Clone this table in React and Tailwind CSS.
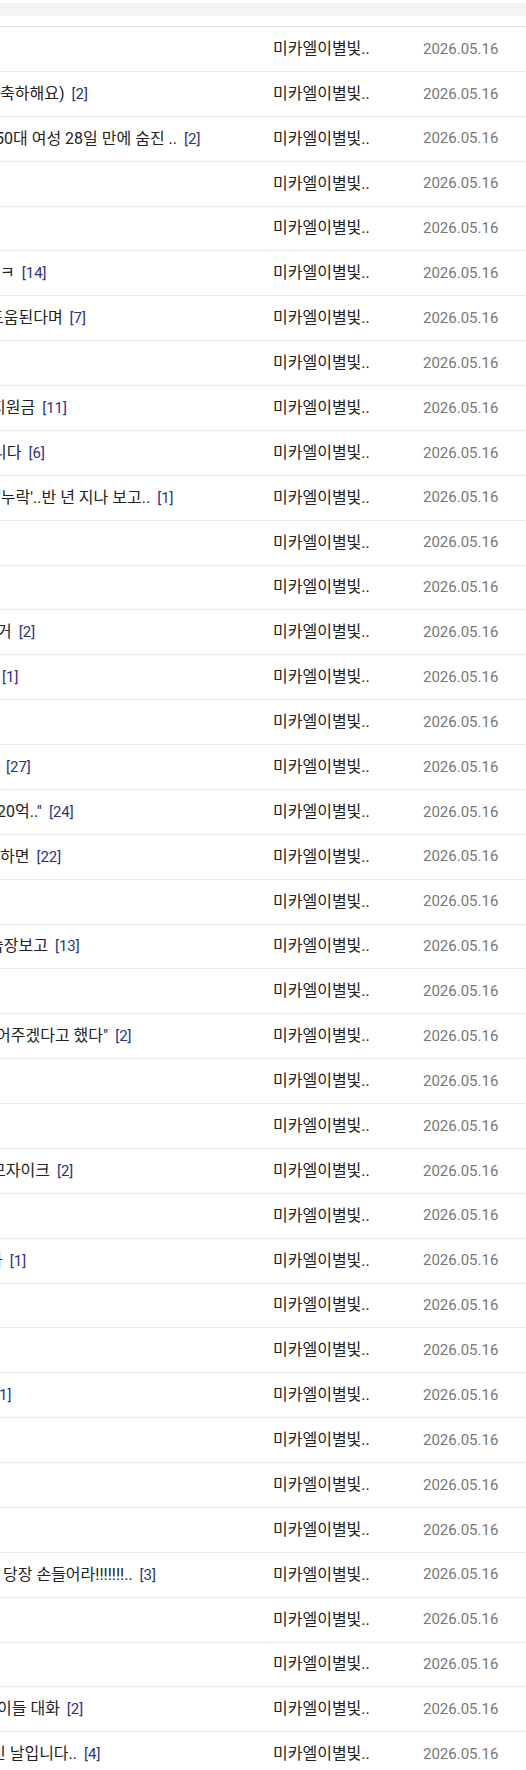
import React from 'react'

const rows = [
  {},
  { t: '축하해요)', c: 2, s: 0 },
  { t: '50대 여성 28일 만에 숨진 ..', c: 2, s: -5 },
  {},
  {},
  { t: 'ㅋ', c: 14, s: 0 },
  { t: '도움된다며', c: 7, s: -11 },
  {},
  { t: '지원금', c: 11, s: -9 },
  { t: '니다', c: 6, s: -8 },
  { t: "'누락'..반 년 지나 보고..", c: 1, s: -2 },
  {},
  {},
  { t: '거', c: 2, s: -3 },
  { t: '', c: 1, s: -5 },
  {},
  { t: '', c: 27, s: -1 },
  { t: '20억.."', c: 24, s: -3 },
  { t: ' 하면', c: 22, s: 0 },
  {},
  { t: '습장보고', c: 13, s: -11 },
  {},
  { t: '어주겠다고 했다"', c: 2, s: -4 },
  {},
  {},
  { t: '모자이크', c: 2, s: -9 },
  {},
  { t: '가', c: 1, s: -12 },
  {},
  {},
  { t: '', c: 1, s: -12 },
  {},
  {},
  {},
  { t: ' 당장 손들어라!!!!!!!..', c: 3, s: 3 },
  {},
  {},
  { t: '이들 대화', c: 2, s: -3 },
  { t: '인 날입니다..', c: 4, s: -9 },
]

const Row = ({ t, c, s = 0 }) => (
  <div className="flex h-[44.88px] items-center border-b border-[#ebebeb]">
    {/* title column starts off-screen, only its tail shows */}
    <div className="w-[273px] shrink-0 overflow-hidden whitespace-nowrap text-[16px] text-[#222]">
      <span style={{ marginLeft: s }}>{t}</span>
      {c && <span className="ml-[7px] text-[15px] text-[#2d3380]">[{c}]</span>}
    </div>
    <div className="w-[150px] shrink-0 whitespace-nowrap text-[16px] text-[#222]">미카엘이별빛..</div>
    <div className="whitespace-nowrap text-[15px] text-[#777]">2026.05.16</div>
  </div>
)

export default function App() {
  return (
    <div className="w-[526px] bg-white font-['Roboto','Noto_Sans_CJK_KR',sans-serif]">
      <div className="border-b border-[#e2e2e2] pt-[3px] pb-[10px]">
        <div className="h-[13px] bg-[#f4f4f4]" />
      </div>
      {rows.map((r, i) => (
        <Row key={i} {...r} />
      ))}
    </div>
  )
}
